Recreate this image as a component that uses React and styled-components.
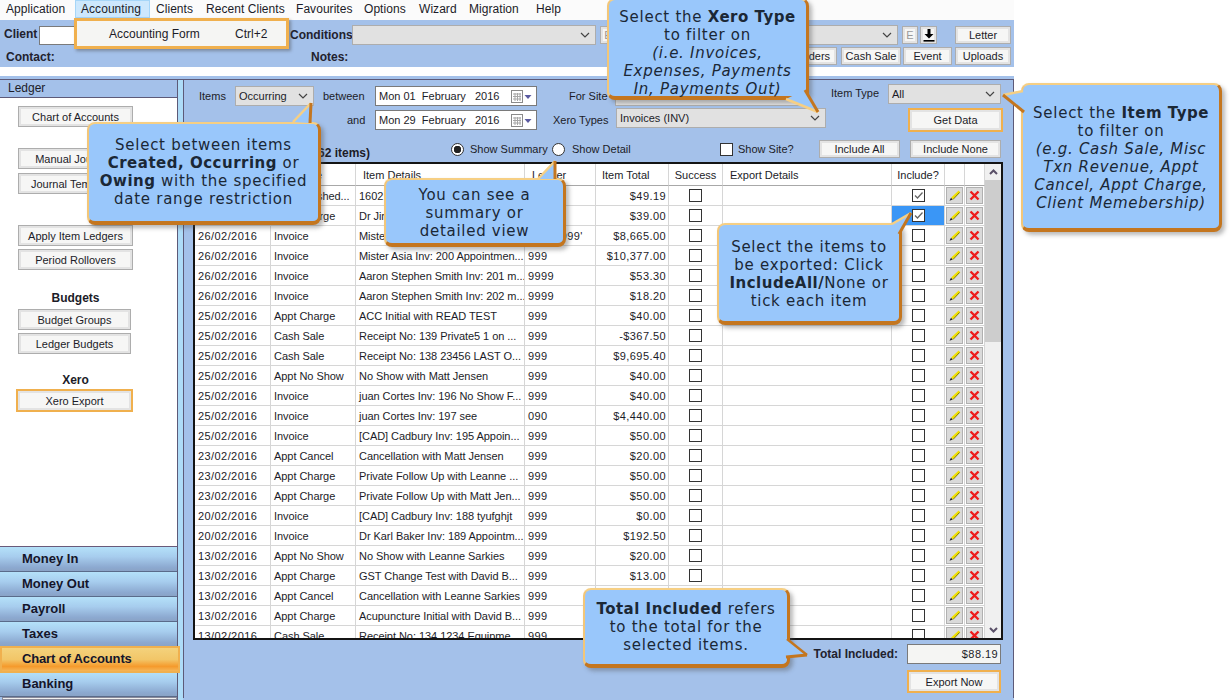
import React from 'react';
import styled, { createGlobalStyle } from 'styled-components';

const Global = createGlobalStyle`
  html, body { margin: 0; padding: 0; background: #fff; }
  * { box-sizing: border-box; }
  body { font-family: "Liberation Sans", Arial, sans-serif; font-size: 11px; color: #1c1c28; }
`;

const BLUE = '#a4c1ea';
const ORANGE = '#f0b04e';
const LINE = '#5d5a78';

const Page = styled.div`
  position: relative;
  width: 1231px;
  height: 700px;
  overflow: hidden;
  background: #fff;
`;
const Win = styled.div`
  width: 1014px;
  height: 700px;
  display: flex;
  flex-direction: column;
`;
const MenuBar = styled.div`
  height: 20px;
  display: flex;
  background: #fbfbfb;
`;
const MenuItem = styled.div`
  width: ${p => p.$w}px;
  height: 18px;
  line-height: 19px;
  padding-left: 6px;
  font-size: 12px;
  letter-spacing: 0.05px;
  white-space: nowrap;
  ${p => p.$active && `background:#cde8fd;box-shadow: inset 0 0 0 1px #a6d6f8;`}
`;
const ClientBar = styled.div`
  height: 47px;
  background: ${BLUE};
  padding-top: 5px;
`;
const Row = styled.div`
  display: flex;
  align-items: center;
  height: ${p => p.$h}px;
  margin-top: ${p => p.$mt ?? 0}px;
`;
const BarLabel = styled.span`
  font-weight: bold;
  font-size: 12px;
  white-space: nowrap;
  color: #22222e;
  width: ${p => p.$w}px;
  margin-left: ${p => p.$ml ?? 0}px;
  transform: translateY(${p => p.$dy ?? 0}px);
`;
const FieldLabel = styled.span`
  white-space: nowrap;
  width: ${p => p.$w}px;
  margin-left: ${p => p.$ml ?? 0}px;
  transform: translateY(${p => p.$dy ?? 0}px);
`;
const PlainInput = styled.div`
  width: ${p => p.$w}px;
  height: 19px;
  background: #fff;
  border: 1px solid #7a7a7a;
`;
const Select = styled.div`
  display: flex;
  align-items: center;
  justify-content: space-between;
  width: ${p => p.$w}px;
  height: ${p => p.$h ?? 20}px;
  margin-left: ${p => p.$ml ?? 0}px;
  transform: translateY(${p => p.$dy ?? 0}px);
  padding: 0 5px 0 3px;
  background: #e1e1e1;
  border: 1px solid #adadad;
  white-space: nowrap;
`;
const Btn = styled.div`
  display: flex;
  align-items: center;
  justify-content: center;
  width: ${p => p.$w}px;
  height: ${p => p.$h ?? 21}px;
  margin-left: ${p => p.$ml ?? 0}px;
  margin-top: ${p => p.$mt ?? 0}px;
  flex: none;
  white-space: nowrap;
  overflow: hidden;
  background: #f6f6f5;
  border: 1px solid #adadad;
  box-shadow: inset 0 0 0 2px #e3e3e3;
  color: ${p => p.$dim ? '#999' : '#1c1c28'};
`;
const HiBtn = styled(Btn)`
  border: 2px solid ${ORANGE};
  box-shadow: inset 0 0 0 2px #e3e3e3;
`;
const Main = styled.div`
  margin-top: 9px;
  height: 624px;
  display: flex;
  background: ${BLUE};
  padding-top: 3px;
`;
const LeftCol = styled.div`
  width: 178px;
  display: flex;
  flex-direction: column;
  border-right: 1px solid ${LINE};
  border-top: 1px solid ${LINE};
`;
const LedgerHead = styled.div`
  height: 18px;
  line-height: 17px;
  padding-left: 8px;
  font-size: 12px;
  background: ${BLUE};
  border-bottom: 1px solid ${LINE};
`;
const SideBody = styled.div`
  flex: 1;
  background: #fff;
  display: flex;
  flex-direction: column;
  padding-left: 18px;
`;
const SideTitle = styled.div`
  width: 115px;
  height: 14px;
  line-height: 14px;
  margin-top: ${p => p.$mt}px;
  text-align: center;
  font-size: 12px;
  font-weight: bold;
`;
const Accordion = styled.div`
  border-top: 1px solid #6a5a7a;
`;
const AccRow = styled.div`
  position: relative;
  height: 25px;
  line-height: 23px;
  padding-left: 22px;
  font-size: 13px;
  font-weight: bold;
  color: #15152a;
  background: linear-gradient(#b4e1f9 0%, #a7cdee 40%, #8ca9d0 85%, #8aa3c6 100%);
  border-bottom: 1px solid #5a6b8a;
  ${p => p.$on && `
    width: 180px;
    z-index: 2;
    background: linear-gradient(#f4d27c 0%, #f2c668 50%, #f59a2c 80%, #f5b556 100%);
    border: 2px solid ${ORANGE};
    padding-left: 20px;
    line-height: 21px;
    height: 27px;
    margin: -1px 0 -1px 0;
    letter-spacing: -0.15px;
  `}
`;
const LeftFoot = styled.div`
  height: 3px;
  background: #f0f0f0;
  border: 1px solid #8a8a9a;
  margin-left: 2px;
`;
const Strip = styled.div`
  width: 5px;
  background: #aedcf8;
  border-top: 1px solid ${LINE};
`;
const RightPanel = styled.div`
  flex: 1;
  display: flex;
  flex-direction: column;
  padding-top: 6px;
  border-left: 1px solid ${LINE};
  border-right: 1px solid ${LINE};
  border-top: 1px solid ${LINE};
  margin-bottom: 2px;
`;
const DateBox = styled.div`
  display: flex;
  align-items: center;
  width: 162px;
  height: 20px;
  margin-left: 11px;
  padding: 0 4px 0 3px;
  background: #fff;
  border: 1px solid #7a7a7a;
  white-space: pre;
`;
const DateText = styled.span`
  flex: 1;
`;
const Count = styled.span`
  width: 186px;
  text-align: right;
  font-size: 12px;
  font-weight: bold;
  white-space: nowrap;
  transform: translateY(4px);
`;
const Radio = styled.span`
  width: 13px;
  height: 13px;
  flex: none;
  margin-left: ${p => p.$ml}px;
  border-radius: 50%;
  border: 1px solid #333;
  background: ${p => p.$on ? 'radial-gradient(circle, #222 0 3.5px, #fff 4px)' : '#fff'};
`;
const Box = styled.span`
  display: inline-flex;
  align-items: center;
  justify-content: center;
  width: 13px;
  height: 13px;
  flex: none;
  margin-left: ${p => p.$ml ?? 0}px;
  border: 1px solid #333;
  background: #fff;
  vertical-align: middle;
`;
const TableWrap = styled.div`
  display: flex;
  width: 810px;
  height: 478px;
  margin: 4px 0 0 9px;
  border: 2px solid #141414;
  background: #fff;
`;
const TableClip = styled.div`
  width: 790px;
  height: 474px;
  overflow: hidden;
`;
const Table = styled.table`
  width: 790px;
  table-layout: fixed;
  border-collapse: separate;
  border-spacing: 0;
  font-size: 11px;
`;
const Th = styled.th`
  height: 22px;
  padding: 0 0 0 ${p => p.$pl ?? 0}px;
  font-weight: normal;
  text-align: ${p => p.$center ? 'center' : 'left'};
  border-right: 1px solid #d6d6d6;
  border-bottom: 1px solid #a8a8a8;
  white-space: nowrap;
  overflow: hidden;
`;
const Td = styled.td`
  height: 20px;
  padding: 0 ${p => p.$pr ?? 0}px 0 ${p => p.$pl ?? 0}px;
  text-align: ${p => p.$align ?? 'left'};
  letter-spacing: ${p => p.$num ? '0.42px' : '-0.05px'};
  border-right: 1px solid #d6d6d6;
  border-bottom: 1px solid #d6d6d6;
  white-space: nowrap;
  overflow: hidden;
  background: ${p => p.$sel ? '#3a96f6' : '#fff'};
`;
const IconBtn = styled.span`
  display: flex;
  align-items: center;
  justify-content: center;
  width: 17px;
  height: 17px;
  background: #dadada;
  border: 1px solid #b0b0b0;
  margin-left: ${p => p.$ml}px;
`;
const ScrollBar = styled.div`
  width: 16px;
  height: 474px;
  display: flex;
  flex-direction: column;
  background: #f0f0f0;
`;
const ScrollEnd = styled.div`
  height: 16px;
  display: flex;
  align-items: center;
  justify-content: center;
`;
const Thumb = styled.div`
  height: 162px;
  background: #cdcdcd;
`;
const ScrollGap = styled.div`
  flex: 1;
`;
const TotalRow = styled.div`
  display: flex;
  justify-content: flex-end;
  align-items: center;
  height: 20px;
  margin: 4px 12px 0 0;
`;
const TotalValue = styled.div`
  width: 94px;
  height: 20px;
  line-height: 18px;
  margin-left: 9px;
  padding-right: 2px;
  text-align: right;
  letter-spacing: 0.42px;
  background: #f5f5f3;
  border: 1px solid #7a7a7a;
`;
const ExportRow = styled.div`
  display: flex;
  justify-content: flex-end;
  margin: 6px 12px 0 0;
`;
const DropMenu = styled.div`
  position: absolute;
  left: 74px;
  top: 18px;
  width: 215px;
  height: 31px;
  display: flex;
  align-items: center;
  font-size: 12px;
  background: #f5f5f3;
  border: 3px solid ${ORANGE};
  box-shadow: 2px 2px 3px rgba(70,70,70,.45);
  z-index: 3;
`;
const DropText = styled.span`
  position: absolute;
  left: ${p => p.$x}px;
  white-space: nowrap;
`;
const Bubble = styled.div`
  position: absolute;
  left: ${p => p.$x}px;
  top: ${p => p.$y}px;
  width: ${p => p.$w}px;
  height: ${p => p.$h}px;
  display: flex;
  align-items: center;
  justify-content: center;
  text-align: center;
  padding-top: ${p => p.$pt ?? 0}px;
  padding-bottom: ${p => p.$pb ?? 0}px;
  background: #99c7fb;
  border-style: solid;
  border-width: 2px 3px 4px 2px;
  border-color: #f6cf84 #c4761f #c4761f #f3c678;
  border-radius: 8px;
  box-shadow: 3px 3px 4px rgba(80,80,80,.4);
  font-family: "DejaVu Sans", Verdana, sans-serif;
  font-size: 15px;
  line-height: 18px;
  letter-spacing: 0.72px;
  color: #1b2836;
  z-index: 4;
  white-space: nowrap;
  b { letter-spacing: 0.5px; }
`;
const Tails = styled.svg`
  position: absolute;
  left: 0;
  top: 0;
  width: 1231px;
  height: 700px;
  z-index: 5;
  pointer-events: none;
`;

const Chevron = () => (
  <svg width="10" height="6" viewBox="0 0 10 6"><path d="M1 1l4 4 4-4" fill="none" stroke="#444" strokeWidth="1.2" /></svg>
);
const Calendar = () => (
  <svg width="21" height="13" viewBox="0 0 21 13">
    <rect x="0.5" y="0.5" width="11" height="12" fill="#fff" stroke="#8a8a8a" />
    <path d="M2 4h8M2 6.5h8M2 9h8M4 3v8M6.5 3v8M9 3v8" stroke="#a6a6a6" strokeWidth="1" />
    <path d="M13.5 5h7l-3.5 4z" fill="#5a5aa0" />
  </svg>
);
const Check = () => (
  <svg width="11" height="11" viewBox="0 0 11 11"><path d="M2 5.5l2.5 2.5L9.5 2.5" fill="none" stroke="#666" strokeWidth="1.3" /></svg>
);
const Pencil = () => (
  <svg width="13" height="13" viewBox="0 0 13 13">
    <path d="M4 9.5L11.5 2.5" stroke="#f0e000" strokeWidth="2.4" />
    <path d="M5 10.5L11.5 3.5" stroke="#5a5400" strokeWidth="0.7" />
    <path d="M1.5 11.8L4.6 10.6 3 8.8z" fill="#222" />
  </svg>
);
const Cross = () => (
  <svg width="11" height="11" viewBox="0 0 11 11"><path d="M1.5 1.5l8 8M9.5 1.5l-8 8" stroke="#ee1c1c" strokeWidth="2.4" /></svg>
);
const DownArrow = () => (
  <svg width="12" height="13" viewBox="0 0 12 13">
    <path d="M4.5 0h3v5h3L6 9.5 1.5 5h3z" fill="#000" />
    <rect x="0.5" y="11" width="11" height="1.6" fill="#000" />
  </svg>
);
const ScrollChevron = ({ up }) => (
  <svg width="9" height="6" viewBox="0 0 9 6">
    <path d={up ? 'M1 5l3.5-3.5L8 5' : 'M1 1l3.5 3.5L8 1'} fill="none" stroke="#5a5068" strokeWidth="2" />
  </svg>
);

const rows = [
  ['29/02/2016', 'Appt Finished...', '1602 Appointment...', '999', '$49.19', 1],
  ['29/02/2016', 'Appt Charge', 'Dr Jim Brown...', '999', '$39.00', 1],
  ['26/02/2016', 'Invoice', 'Mister Asia Inv: 199 Appointmen...', "99999999'", '$8,665.00'],
  ['26/02/2016', 'Invoice', 'Mister Asia Inv: 200 Appointmen...', '999', '$10,377.00'],
  ['26/02/2016', 'Invoice', 'Aaron Stephen Smith Inv: 201 m...', '9999', '$53.30'],
  ['26/02/2016', 'Invoice', 'Aaron Stephen Smith Inv: 202 m...', '9999', '$18.20'],
  ['25/02/2016', 'Appt Charge', 'ACC Initial with READ  TEST', '999', '$40.00'],
  ['25/02/2016', 'Cash Sale', 'Receipt No: 139 Private5 1 on ...', '999', '-$367.50'],
  ['25/02/2016', 'Cash Sale', 'Receipt No: 138 23456 LAST O...', '999', '$9,695.40'],
  ['25/02/2016', 'Appt No Show', 'No Show with Matt Jensen', '999', '$40.00'],
  ['25/02/2016', 'Invoice', 'juan Cortes Inv: 196 No Show F...', '999', '$40.00'],
  ['25/02/2016', 'Invoice', 'juan Cortes Inv: 197 see', '090', '$4,440.00'],
  ['25/02/2016', 'Invoice', '[CAD] Cadbury  Inv: 195 Appoin...', '999', '$50.00'],
  ['23/02/2016', 'Appt Cancel', 'Cancellation with Matt Jensen', '999', '$20.00'],
  ['23/02/2016', 'Appt Charge', 'Private Follow Up with Leanne ...', '999', '$50.00'],
  ['23/02/2016', 'Appt Charge', 'Private Follow Up with Matt Jen...', '999', '$50.00'],
  ['20/02/2016', 'Invoice', '[CAD] Cadbury  Inv: 188 tyufghjt', '999', '$0.00'],
  ['20/02/2016', 'Invoice', 'Dr Karl Baker Inv: 189 Appointm...', '999', '$192.50'],
  ['13/02/2016', 'Appt No Show', 'No Show with Leanne Sarkies', '999', '$20.00'],
  ['13/02/2016', 'Appt Charge', 'GST Change Test with David B...', '999', '$13.00'],
  ['13/02/2016', 'Appt Cancel', 'Cancellation with Leanne Sarkies', '999', '$20.00'],
  ['13/02/2016', 'Appt Charge', 'Acupuncture Initial with David B...', '999', '$40.00'],
  ['13/02/2016', 'Cash Sale', 'Receipt No: 134 1234 Equipme...', '999', '$60.00'],
];

const menus = [
  ['Application', 75], ['Accounting', 75], ['Clients', 50], ['Recent Clients', 90],
  ['Favourites', 68], ['Options', 55], ['Wizard', 50], ['Migration', 67], ['Help', 39],
];
const widths = [76, 85, 169, 71, 73, 54, 169, 53, 20, 20];

const tails = [
  { base1: [293, 122], tip: [311, 103], base2: [310, 123], first: '#f6cf84', second: '#c4761f' },
  { base1: [786, 99], tip: [818, 112], base2: [805, 90], first: '#f6cf84', second: '#c4761f' },
  { base1: [538, 179], tip: [555, 161], base2: [555, 179], first: '#f6cf84', second: '#c4761f' },
  { base1: [1023, 91], tip: [1003, 95], base2: [1024, 112], first: '#f6cf84', second: '#c4761f' },
  { base1: [892, 224], tip: [911, 213], base2: [899, 234], first: '#f6cf84', second: '#c4761f' },
  { base1: [787, 639], tip: [807, 655], base2: [786, 657], first: '#c4761f', second: '#c4761f' },
];

export default function App() {
  return (
    <Page>
      <Global />
      <Win>
        <MenuBar>
          {menus.map(([m, w]) => <MenuItem key={m} $w={w} $active={m === 'Accounting'}>{m}</MenuItem>)}
        </MenuBar>
        <ClientBar>
          <Row $h={20}>
            <BarLabel $w={35} $ml={4} $dy={-1}>Client</BarLabel>
            <PlainInput $w={40} />
            <BarLabel $w={60} $ml={211}>Conditions</BarLabel>
            <Select $w={244} $ml={2}><span /><Chevron /></Select>
            <Btn $w={16} $h={18} $ml={4} $dim>E</Btn>
            <Select $w={90} $ml={192}><span /><Chevron /></Select>
            <Btn $w={16} $h={18} $ml={4} $dim>E</Btn>
            <Btn $w={17} $h={18} $ml={2}><DownArrow /></Btn>
            <Btn $w={56} $h={18} $ml={18}>Letter</Btn>
          </Row>
          <Row $h={18} $mt={2}>
            <BarLabel $w={45} $ml={6} $dy={1}>Contact:</BarLabel>
            <BarLabel $w={35} $ml={260} $dy={1}>Notes:</BarLabel>
            <Btn $w={67} $h={18} $ml={424}>Reminders</Btn>
            <Btn $w={60} $h={18} $ml={4}>Cash Sale</Btn>
            <Btn $w={49} $h={18} $ml={2}>Event</Btn>
            <Btn $w={56} $h={18} $ml={3}>Uploads</Btn>
          </Row>
        </ClientBar>
        <Main>
          <LeftCol>
            <LedgerHead>Ledger</LedgerHead>
            <SideBody>
              <Btn $w={115} $mt={8}>Chart of Accounts</Btn>
              <Btn $w={115} $mt={21}>Manual Journals</Btn>
              <Btn $w={115} $mt={4}>Journal Templates</Btn>
              <Btn $w={115} $mt={31}>Apply Item Ledgers</Btn>
              <Btn $w={115} $mt={3}>Period Rollovers</Btn>
              <SideTitle $mt={21}>Budgets</SideTitle>
              <Btn $w={113} $mt={4}>Budget Groups</Btn>
              <Btn $w={113} $mt={3}>Ledger Budgets</Btn>
              <SideTitle $mt={19}>Xero</SideTitle>
              <HiBtn $w={117} $h={23} $ml={-2} $mt={2}>Xero Export</HiBtn>
            </SideBody>
            <Accordion>
              <AccRow>Money In</AccRow>
              <AccRow>Money Out</AccRow>
              <AccRow>Payroll</AccRow>
              <AccRow>Taxes</AccRow>
              <AccRow $on>Chart of Accounts</AccRow>
              <AccRow>Banking</AccRow>
            </Accordion>
            <LeftFoot />
          </LeftCol>
          <Strip />
          <RightPanel>
            <Row $h={20}>
              <FieldLabel $w={36} $ml={15}>Items</FieldLabel>
              <Select $w={79}>Occurring<Chevron /></Select>
              <FieldLabel $w={41} $ml={9}>between</FieldLabel>
              <DateBox><DateText>{'Mon 01  February   2016'}</DateText><Calendar /></DateBox>
              <FieldLabel $w={36} $ml={32}>For Site</FieldLabel>
              <Select $w={190} $ml={10}>All<Chevron /></Select>
              <FieldLabel $w={46} $ml={26} $dy={-3}>Item Type</FieldLabel>
              <Select $w={113} $ml={11} $dy={-2}>All<Chevron /></Select>
            </Row>
            <Row $h={20} $mt={4}>
              <FieldLabel $w={17} $ml={163}>and</FieldLabel>
              <DateBox><DateText>{'Mon 29  February   2016'}</DateText><Calendar /></DateBox>
              <FieldLabel $w={53} $ml={16}>Xero Types</FieldLabel>
              <Select $w={210} $ml={10} $dy={-2}>Invoices (INV)<Chevron /></Select>
              <HiBtn $w={95} $h={24} $ml={82}>Get Data</HiBtn>
            </Row>
            <Row $h={18} $mt={10}>
              <Count>Ledger Items (62 items)</Count>
              <Radio $ml={81} $on />
              <FieldLabel $w={74} $ml={6}>Show Summary</FieldLabel>
              <Radio $ml={8} />
              <FieldLabel $w={56} $ml={7}>Show Detail</FieldLabel>
              <Box $ml={92} />
              <FieldLabel $w={55} $ml={5}>Show Site?</FieldLabel>
              <Btn $w={81} $h={18} $ml={26}>Include All</Btn>
              <Btn $w={91} $h={18} $ml={10}>Include None</Btn>
            </Row>
            <TableWrap>
              <TableClip>
                <Table>
                  <colgroup>
                    {widths.map((w, i) => <col key={i} width={w} />)}
                  </colgroup>
                  <thead>
                    <tr>
                      <Th $pl={8}>Date</Th>
                      <Th $pl={3}>Item Type</Th>
                      <Th $pl={7}>Item Details</Th>
                      <Th $pl={7}>Ledger</Th>
                      <Th $pl={6}>Item Total</Th>
                      <Th $center>Success</Th>
                      <Th $pl={7}>Export Details</Th>
                      <Th $center>Include?</Th>
                      <Th />
                      <Th />
                    </tr>
                  </thead>
                  <tbody>
                    {rows.map((r, i) => (
                      <tr key={i}>
                        <Td $pl={3} $num>{r[0]}</Td>
                        <Td $pl={3}>{r[1]}</Td>
                        <Td $pl={3}>{r[2]}</Td>
                        <Td $pl={3} $num>{r[3]}</Td>
                        <Td $align="right" $pr={2} $num>{r[4]}</Td>
                        <Td $align="center"><Box /></Td>
                        <Td />
                        <Td $align="center" $sel={i === 1}><Box>{r[5] ? <Check /> : null}</Box></Td>
                        <Td><IconBtn $ml={1}><Pencil /></IconBtn></Td>
                        <Td><IconBtn $ml={1}><Cross /></IconBtn></Td>
                      </tr>
                    ))}
                  </tbody>
                </Table>
              </TableClip>
              <ScrollBar>
                <ScrollEnd><ScrollChevron up /></ScrollEnd>
                <Thumb />
                <ScrollGap />
                <ScrollEnd><ScrollChevron /></ScrollEnd>
              </ScrollBar>
            </TableWrap>
            <TotalRow>
              <BarLabel>Total Included:</BarLabel>
              <TotalValue>$88.19</TotalValue>
            </TotalRow>
            <ExportRow>
              <HiBtn $w={94} $h={23}>Export Now</HiBtn>
            </ExportRow>
          </RightPanel>
        </Main>
      </Win>

      <DropMenu>
        <DropText $x={32}>Accounting Form</DropText>
        <DropText $x={158}>Ctrl+2</DropText>
      </DropMenu>

      <Bubble $x={87} $y={122} $w={234} $h={103} $pb={2}>
        <div>Select between items<br /><b>Created, Occurring</b> or<br /><b>Owing</b> with the specified<br />date range restriction</div>
      </Bubble>
      <Bubble $x={607} $y={-2} $w={202} $h={102} $pt={10}>
        <div>Select the <b>Xero Type</b><br />to filter on<br /><i>(i.e. Invoices,<br />Expenses, Payments<br />In, Payments Out)</i></div>
      </Bubble>
      <Bubble $x={384} $y={178} $w={182} $h={69} $pt={2}>
        <div>You can see a<br />summary or<br />detailed view</div>
      </Bubble>
      <Bubble $x={1021} $y={83} $w={201} $h={149} $pt={2}>
        <div>Select the <b>Item Type</b><br />to filter on<br /><i>(e.g. Cash Sale, Misc<br />Txn Revenue, Appt<br />Cancel, Appt Charge,<br />Client Memebership)</i></div>
      </Bubble>
      <Bubble $x={717} $y={223} $w={185} $h={102} $pt={2}>
        <div>Select the items to<br />be exported: Click<br /><b>IncludeAll/</b>None or<br />tick each item</div>
      </Bubble>
      <Bubble $x={583} $y={588} $w={207} $h={80}>
        <div><b>Total Included</b> refers<br />to the total for the<br />selected items.</div>
      </Bubble>

      <Tails viewBox="0 0 1231 700">
        {tails.map((t, i) => (
          <g key={i}>
            <polygon points={`${t.base1} ${t.tip} ${t.base2}`} fill="#99c7fb" />
            <polyline points={`${t.base1} ${t.tip}`} fill="none" stroke={t.first} strokeWidth="2.5" />
            <polyline points={`${t.tip} ${t.base2}`} fill="none" stroke={t.second} strokeWidth="3" />
          </g>
        ))}
      </Tails>
    </Page>
  );
}
